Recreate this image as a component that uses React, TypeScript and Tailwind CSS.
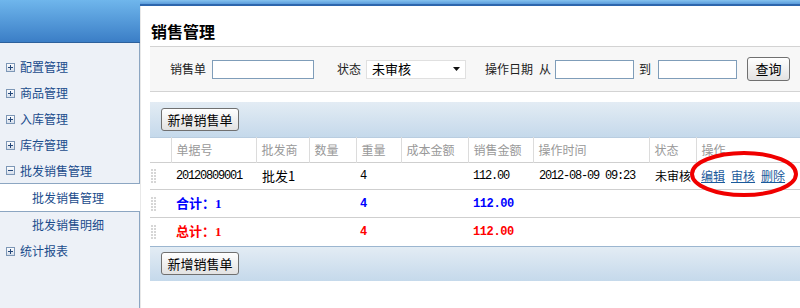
import React from "react";

const cjk = "font-['Noto_Sans_CJK_SC',sans-serif]";
const mono = "font-['Liberation_Mono','Noto_Sans_CJK_SC',monospace] tracking-[-1.2px]";
const serifBold = "font-['Liberation_Serif','Noto_Sans_CJK_SC',serif] font-bold";
const monoBold = "font-['Liberation_Mono',monospace] font-bold tracking-[-0.4px]";

const menuTop = ["配置管理", "商品管理", "入库管理", "库存管理"];

const columns = [
  { label: "", width: 21 },
  { label: "单据号", width: 85 },
  { label: "批发商", width: 53 },
  { label: "数量", width: 47 },
  { label: "重量", width: 45 },
  { label: "成本金额", width: 67 },
  { label: "销售金额", width: 65 },
  { label: "操作时间", width: 116 },
  { label: "状态", width: 47 },
  { label: "操作", width: 104 },
];

function ToggleBox({ minus }: { minus?: boolean }) {
  return (
    <svg width="9" height="9" viewBox="0 0 9 9" className="shrink-0">
      <defs>
        <linearGradient id="tb" x1="0" y1="0" x2="0" y2="1">
          <stop offset="0" stopColor="#ffffff" />
          <stop offset="1" stopColor="#d3dcea" />
        </linearGradient>
      </defs>
      <rect x="0.5" y="0.5" width="8" height="8" fill="url(#tb)" stroke="#7d97b6" />
      <path d="M2 4.5h5" stroke="#24487a" />
      {!minus && <path d="M4.5 2v5" stroke="#24487a" />}
    </svg>
  );
}

function Grip() {
  const dots = [];
  for (let r = 0; r < 5; r++) {
    for (let c = 0; c < 2; c++) {
      dots.push(<rect key={`${r}-${c}`} x={c * 3} y={r * 3} width="2" height="2" fill="#d6d6d6" />);
    }
  }
  return (
    <svg width="5" height="14" viewBox="0 0 5 14" className="ml-[1px]">
      {dots}
    </svg>
  );
}

function Button({ children }: { children: React.ReactNode }) {
  return (
    <button className="h-[23px] w-[78px] rounded-[3px] border border-[#707070] bg-gradient-to-b from-white to-[#e2e2e2] text-[13px] text-black">
      {children}
    </button>
  );
}

function Toolbar({ top }: { top?: boolean }) {
  return (
    <div
      className={`flex h-[35px] items-center bg-gradient-to-b from-[#e3ecf4] to-[#c5d9eb] pl-[11px] ${
        top ? "" : "border-t border-[#9cb6d0]"
      }`}
    >
      <Button>新增销售单</Button>
    </div>
  );
}

function TotalRow({ label, color, last }: { label: string; color: string; last?: boolean }) {
  return (
    <tr className={`h-[28px] ${last ? "" : "border-b border-[#cfcfcf]"} ${color} ${serifBold}`}>
      <td><Grip /></td>
      <td className="whitespace-nowrap pl-[5px] text-[13px]">{label}</td>
      <td />
      <td />
      <td className={`pl-[4px] ${monoBold}`}>4</td>
      <td />
      <td className={`pl-[5px] ${monoBold}`}>112.00</td>
      <td />
      <td />
      <td />
    </tr>
  );
}

export default function App() {
  return (
    <div className={`relative flex h-[308px] w-[800px] overflow-hidden bg-white ${cjk}`}>
      {/* sidebar */}
      <aside className="flex w-[140px] shrink-0 flex-col bg-[#edf1f7]">
        <div className="h-[43px] border-b border-[#2c609c] bg-gradient-to-b from-[#6fb6ec] to-[#3b7ec6]" />
        <div className="flex-1 border-r border-[#8ca6c2] pt-[11px] text-[12px] text-[#1a4c8c]">
          {menuTop.map((m) => (
            <div key={m} className="flex h-[26px] items-center gap-[5px] pl-[6px]">
              <ToggleBox />
              <span>{m}</span>
            </div>
          ))}
          <div className="flex h-[25px] items-center gap-[5px] pl-[6px]">
            <ToggleBox minus />
            <span>批发销售管理</span>
          </div>
          <div className="-mr-px flex h-[29px] items-center border-y border-[#8ca6c2] bg-white pl-[32px]">
            批发销售管理
          </div>
          <div className="flex h-[26px] items-center pl-[32px]">批发销售明细</div>
          <div className="flex h-[26px] items-center gap-[5px] pl-[6px]">
            <ToggleBox />
            <span>统计报表</span>
          </div>
        </div>
      </aside>

      {/* main */}
      <main className="flex min-w-0 flex-1 flex-col">
        <div className="h-[6px] border-b-2 border-[#2d66ad] bg-gradient-to-b from-[#86c3ef] to-[#5a9bdb]" />
        <div className="flex-1 border-l border-[#e8e8e8] pl-[9px]">
          <div className="h-[40px] pl-[1px] pt-[14px] text-[16px] font-bold leading-[22px] text-black">
            销售管理
          </div>

          {/* search panel */}
          <div className="flex h-[46px] items-center border-y border-[#d3d3d3] bg-[#f7f7f7] pl-[20px] text-[12px] text-[#222]">
            <span>销售单</span>
            <div className="ml-[6px] h-[19px] w-[102px] border border-[#7f9db9] bg-white" />
            <span className="ml-[23px]">状态</span>
            <div className="ml-[5px] flex h-[19px] w-[100px] items-center justify-between border border-[#e0e0e0] bg-white pl-[5px] pr-[5px] text-black">
              <span className="text-[13px]">未审核</span>
              <svg width="7" height="4" viewBox="0 0 7 4">
                <path d="M0 0h7L3.5 4z" fill="#111" />
              </svg>
            </div>
            <span className="ml-[19px]">操作日期</span>
            <span className="ml-[6px]">从</span>
            <div className="ml-[4px] h-[19px] w-[79px] border border-[#7f9db9] bg-white" />
            <span className="ml-[5px]">到</span>
            <div className="ml-[7px] h-[19px] w-[79px] border border-[#7f9db9] bg-white" />
            <button className="ml-[10px] h-[24px] w-[43px] rounded-[3px] border border-[#707070] bg-gradient-to-b from-white to-[#e2e2e2] text-[13px] text-black">
              查询
            </button>
          </div>

          {/* grid */}
          <div className="mt-[10px] w-[650px]">
            <Toolbar top />
            <table className="w-[650px] table-fixed border-collapse text-[12px]">
              <colgroup>
                {columns.map((c, i) => (
                  <col key={i} style={{ width: c.width }} />
                ))}
              </colgroup>
              <thead>
                <tr className="h-[25px] border-b border-t border-[#cfcfcf] border-t-[#b9cde0]">
                  {columns.map((c, i) => (
                    <th
                      key={i}
                      className={`whitespace-nowrap pl-[5px] text-left font-normal text-[#999] ${
                        i < columns.length - 1 ? "border-r border-[#dcdcdc]" : ""
                      }`}
                    >
                      {c.label}
                    </th>
                  ))}
                </tr>
              </thead>
              <tbody>
                <tr className="h-[27px] border-b border-[#cfcfcf] text-black">
                  <td><Grip /></td>
                  <td className={`pl-[5px] ${mono}`}>20120809001</td>
                  <td className="pl-[6px] text-[13px]">批发1</td>
                  <td />
                  <td className={`pl-[4px] ${mono}`}>4</td>
                  <td />
                  <td className={`pl-[5px] ${mono}`}>112.00</td>
                  <td className={`whitespace-nowrap pl-[6px] ${mono}`}>2012-08-09 09:23</td>
                  <td className="whitespace-nowrap pl-[6px]">未审核</td>
                  <td className="whitespace-nowrap pl-[5px]">
                    <span className="flex gap-[6px] text-[#1a5a9b] underline">
                      <a>编辑</a>
                      <a>审核</a>
                      <a>删除</a>
                    </span>
                  </td>
                </tr>
                <TotalRow label="合计：1" color="text-[#0000ff]" />
                <TotalRow label="总计：1" color="text-[#ff0000]" last />
              </tbody>
            </table>
            <Toolbar />
          </div>
        </div>
      </main>

      {/* red annotation ellipse */}
      <svg
        className="pointer-events-none absolute left-[688px] top-[150px]"
        width="112"
        height="50"
        viewBox="0 0 112 50"
      >
        <ellipse cx="56" cy="24" rx="52" ry="21" fill="none" stroke="#f00000" strokeWidth="4" />
      </svg>
    </div>
  );
}
